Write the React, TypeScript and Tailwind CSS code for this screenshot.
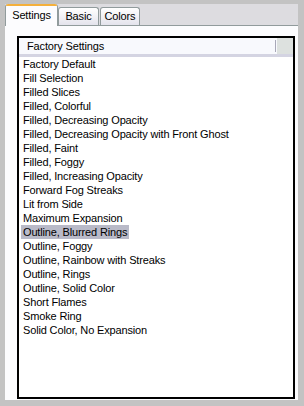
import React from "react";

const items = [
  "Factory Default",
  "Fill Selection",
  "Filled Slices",
  "Filled, Colorful",
  "Filled, Decreasing Opacity",
  "Filled, Decreasing Opacity with Front Ghost",
  "Filled, Faint",
  "Filled, Foggy",
  "Filled, Increasing Opacity",
  "Forward Fog Streaks",
  "Lit from Side",
  "Maximum Expansion",
  "Outline, Blurred Rings",
  "Outline, Foggy",
  "Outline, Rainbow with Streaks",
  "Outline, Rings",
  "Outline, Solid Color",
  "Short Flames",
  "Smoke Ring",
  "Solid Color, No Expansion",
];

export default function App() {
  return (
    <div
      className="w-[304px] h-[406px] bg-[#c3c3c3] pt-[4px] pl-[5px] pr-[6px] pb-[6px] flex text-[11px] tracking-[-0.15px] text-black"
      style={{ fontFamily: '"Liberation Sans", Arial, sans-serif' }}
    >
      <div className="flex-1 flex flex-col">
        {/* tab strip */}
        <div className="h-[22px] bg-[#dddce0] border-b border-[#919b9c] flex items-end">
          <div className="relative h-[22px] w-[53px] -mb-px bg-[#fcfcfe] border-x border-[#919b9c] rounded-t-[3px] flex items-center justify-center z-10">
            <div className="absolute top-0 left-0 right-0 h-[2px] bg-[#f4b03c] rounded-t-[3px]" />
            <span className="mt-[1px]">Settings</span>
          </div>
          <div className="h-[18px] w-[41px] bg-gradient-to-b from-white to-[#e4e3ec] border border-b-0 border-[#919b9c] rounded-t-[3px] flex items-center justify-center">
            Basic
          </div>
          <div className="h-[18px] w-[40px] ml-px bg-gradient-to-b from-white to-[#e4e3ec] border border-b-0 border-[#919b9c] rounded-t-[3px] flex items-center justify-center">
            Colors
          </div>
        </div>
        {/* body */}
        <div className="flex-1 bg-[#fcfcfe] pt-[10px] pl-[12px] pr-[3px] pb-[1px] flex">
          <div className="flex-1 border-2 border-black bg-white flex flex-col">
            <div className="h-[19px] flex border-b-[3px] border-[#d4d4e2]">
              <div className="flex-1 bg-[#f8f9fd] flex items-center pl-[8px] relative">
                Factory Settings
                <div className="absolute right-[1px] top-[2px] bottom-[2px] w-px bg-[#a8a8b8]" />
              </div>
              <div className="w-[16px] bg-[#dde1df]" />
            </div>
            <div className="flex flex-col pl-[2px]">
              {items.map((t) => (
                <div key={t} className="h-[14px] flex items-center">
                  <span
                    className={
                      "px-[2px] h-[14px] leading-[14px] whitespace-nowrap " +
                      (t === "Outline, Blurred Rings" ? "bg-[#b9bac8]" : "")
                    }
                  >
                    {t}
                  </span>
                </div>
              ))}
            </div>
          </div>
        </div>
      </div>
    </div>
  );
}
